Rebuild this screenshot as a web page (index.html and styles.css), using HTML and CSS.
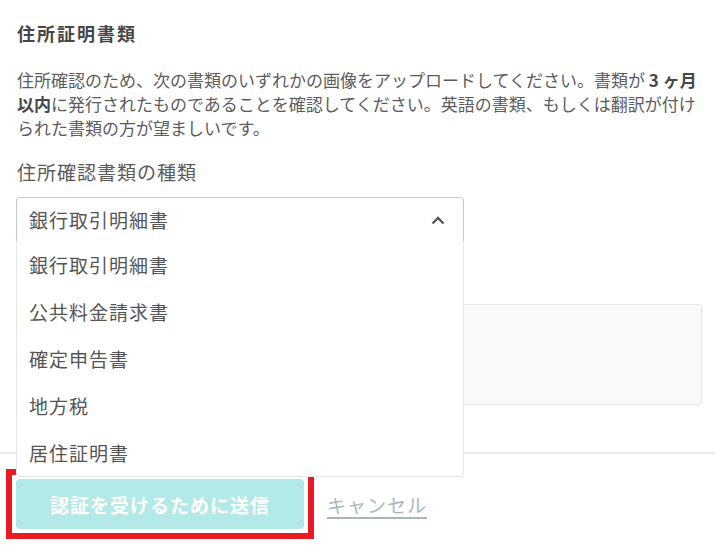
FILE: index.html
```html
<!DOCTYPE html>
<html lang="ja">
<head>
<meta charset="utf-8">
<link rel="stylesheet" href="styles.css">
</head>
<body>
<div class="content">
  <h2 class="title">住所証明書類</h2>
  <p class="desc">住所確認のため、次の書類のいずれかの画像をアップロードしてください。書類が <strong>3 ヶ月以内</strong>に発行されたものであることを確認してください。英語の書類、もしくは翻訳が付けられた書類の方が望ましいです。</p>
  <div class="field-label">住所確認書類の種類</div>
  <div class="select">
    <div class="select-box">
      <span class="select-value">銀行取引明細書</span>
      <svg class="chevron" width="14" height="9" viewBox="0 0 14 9"><path d="M1.5 7.5 L7 2 L12.5 7.5" fill="none" stroke="#555" stroke-width="2.4"/></svg>
    </div>
    <ul class="menu">
      <li>銀行取引明細書</li>
      <li>公共料金請求書</li>
      <li>確定申告書</li>
      <li>地方税</li>
      <li>居住証明書</li>
    </ul>
  </div>
  <div class="upload"></div>
</div>
<div class="footer">
  <span class="highlight"><button class="submit">認証を受けるために送信</button></span>
  <a class="cancel" href="#">キャンセル</a>
</div>
</body>
</html>
```

FILE: styles.css
```css
* { box-sizing: border-box; }
html, body { margin: 0; padding: 0; background: #fff; }
body {
  font-family: "Noto Sans CJK JP", "Noto Sans", sans-serif;
  color: #555;
  width: 715px;
  height: 545px;
  overflow: hidden;
}
.content {
  padding: 19px 13px 0 16px;
}
.title {
  margin: 0;
  font-size: 18px;
  letter-spacing: 2px;
  line-height: 28px;
  font-weight: 700;
  color: #474747;
  padding-left: 1px;
}
.desc {
  margin: 21px 0 0 0;
  font-size: 17px;
  line-height: 24px;
  color: #5c5c5c;
  padding-left: 1px;
}
.desc strong { color: #474747; }
.field-label {
  margin-top: 18px;
  font-size: 19px;
  letter-spacing: 1px;
  line-height: 28px;
  color: #5a5a5a;
  padding-left: 1px;
}
.select {
  position: relative;
  width: 448px;
  margin-top: 11px;
}
.select-box {
  height: 44px;
  border: 1px solid #c9c9c9;
  border-bottom: none;
  border-radius: 4px 4px 0 0;
  display: flex;
  align-items: center;
  justify-content: space-between;
  padding: 0 18px 0 12px;
}
.select-value {
  font-size: 19px;
  letter-spacing: 1px;
  color: #555;
}
.chevron { display: block; margin-top: 2px; }
.menu {
  position: absolute;
  top: 44px;
  left: 0;
  width: 448px;
  margin: 0;
  padding: 0;
  list-style: none;
  background: #fff;
  border: 1px solid #e6e6e6;
  border-top: none;
  border-radius: 0 0 4px 4px;
  z-index: 10;
}
.menu li {
  height: 47px;
  display: flex;
  align-items: center;
  padding-left: 12px;
  font-size: 19px;
  letter-spacing: 1px;
  color: #555;
}
.upload {
  margin-top: 63px;
  height: 101px;
  background: #f8f9fa;
  border: 1px solid #e6e6e6;
  border-radius: 4px;
}
.footer {
  margin-top: 47px;
  border-top: 2px solid #e8e8e8;
  padding: 15px 16px 0 6px;
  display: flex;
  align-items: center;
  gap: 13px;
}
.highlight {
  display: flex;
  border: 6px solid #e81b25;
  padding: 4px;
}
.submit {
  display: block;
  width: 288px;
  height: 50px;
  border: none;
  border-radius: 4px;
  background: #b3e9e7;
  color: #fff;
  font-family: "Noto Sans CJK JP", "Noto Sans", sans-serif;
  font-size: 19px;
  letter-spacing: 1px;
  font-weight: 700;
  padding: 0;
}
.cancel {
  font-size: 19px;
  letter-spacing: 1px;
  color: #aab6be;
  text-decoration: underline;
  text-decoration-thickness: 2px;
  text-underline-offset: 4px;
}
```
